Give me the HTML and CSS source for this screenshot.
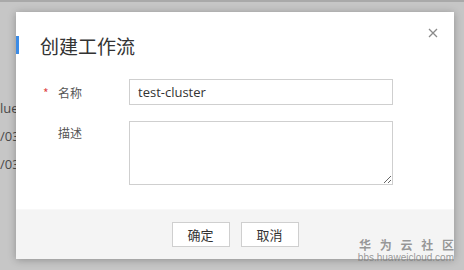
FILE: index.html
```html
<!DOCTYPE html>
<html lang="zh">
<head>
<meta charset="utf-8">
<link rel="stylesheet" href="styles.css">
</head>
<body>
<div class="page">
  <div class="topline"></div>
  <div class="bg-col">
    <div class="bg-text">lue</div>
    <div class="bg-text">/03</div>
    <div class="bg-text">/03</div>
  </div>
</div>
<div class="dialog">
  <div class="dlg-head">
    <span class="bar"></span>
    <h1 class="title">创建工作流</h1>
    <span class="close">
      <svg width="10" height="10" viewBox="0 0 10 10"><path d="M1 1L9 9M9 1L1 9" stroke="#8a8a8a" stroke-width="1.3" fill="none"/></svg>
    </span>
  </div>
  <div class="dlg-body">
    <div class="row">
      <label class="label"><span class="req">*</span>名称</label>
      <input class="field" type="text" value="test-cluster">
    </div>
    <div class="row row-top">
      <label class="label label-top">描述</label>
      <textarea class="field area"></textarea>
    </div>
  </div>
  <div class="dlg-foot">
    <button class="btn">确定</button>
    <button class="btn">取消</button>
  </div>
</div>
<div class="watermark">
  <div class="wm-cn">华 为 云 社 区</div>
  <div class="wm-en">bbs.huaweicloud.com</div>
</div>
</body>
</html>
```

FILE: styles.css
```css
html, body {
  margin: 0;
  padding: 0;
}
body {
  width: 464px;
  height: 270px;
  overflow: hidden;
  position: relative;
  background: #c6c6c6;
  font-family: "Open Sans", "Noto Sans CJK SC", sans-serif;
}
.page {
  height: 270px;
}
.topline {
  height: 2px;
  background: #a9a9a9;
}
.bg-col {
  padding-top: 92px;
  padding-left: 0;
}
.bg-text {
  font-size: 13px;
  color: #4a4a4a;
  line-height: 28px;
  height: 28px;
  font-family: "Open Sans", sans-serif;
}
.dialog {
  position: absolute;
  left: 16px;
  top: 12px;
  width: 438px;
  height: 247px;
  background: #fff;
  box-shadow: 0 1px 8px rgba(0,0,0,0.28);
  display: flex;
  flex-direction: column;
}
.dlg-head {
  display: flex;
  align-items: center;
  height: 30px;
  margin-top: 18px;
  position: relative;
}
.bar {
  width: 3px;
  height: 18px;
  background: #3b8be6;
}
.title {
  margin: 0 0 0 21px;
  font-size: 19px;
  font-weight: normal;
  color: #333;
  font-family: "Noto Sans CJK SC", sans-serif;
}
.close {
  position: absolute;
  right: 16px;
  top: -2px;
  width: 10px;
  height: 10px;
  display: flex;
}
.dlg-body {
  padding-top: 19px;
  flex: 1;
}
.row {
  display: flex;
  align-items: center;
  margin-bottom: 16px;
}
.row-top {
  align-items: flex-start;
}
.label {
  width: 113px;
  box-sizing: border-box;
  padding-left: 27px;
  font-size: 12px;
  color: #555;
  font-family: "Noto Sans CJK SC", sans-serif;
  display: flex;
  align-items: center;
}
.label-top {
  padding-left: 42px;
  padding-top: 3px;
}
.req {
  color: #e04848;
  width: 15px;
  font-size: 12px;
}
.field {
  width: 264px;
  height: 26px;
  box-sizing: border-box;
  border: 1px solid #cfcfcf;
  padding: 0 8px;
  font-size: 13px;
  color: #333;
  font-family: "Open Sans", sans-serif;
  outline: none;
  margin: 0;
}
.area {
  height: 64px;
  resize: vertical;
  display: block;
}
.dlg-foot {
  height: 50px;
  background: #f4f4f4;
  border-top: 1px solid #f8f8f8;
  box-sizing: border-box;
  display: flex;
  align-items: center;
  justify-content: center;
  gap: 11px;
}
.btn {
  width: 58px;
  height: 25px;
  background: #fff;
  border: 1px solid #cfcfcf;
  font-size: 13px;
  color: #333;
  font-family: "Noto Sans CJK SC", sans-serif;
  padding: 0;
  margin: 0;
}
.watermark {
  position: absolute;
  right: 10px;
  bottom: 6px;
  text-align: right;
  color: rgba(120,120,120,0.75);
}
.wm-cn {
  font-size: 12px;
  line-height: 15px;
  letter-spacing: 3px;
  font-weight: bold;
  font-family: "Noto Sans CJK SC", sans-serif;
  margin-right: -3px;
}
.wm-en {
  font-size: 10px;
  line-height: 12px;
  font-family: "Liberation Sans", sans-serif;
}
```
